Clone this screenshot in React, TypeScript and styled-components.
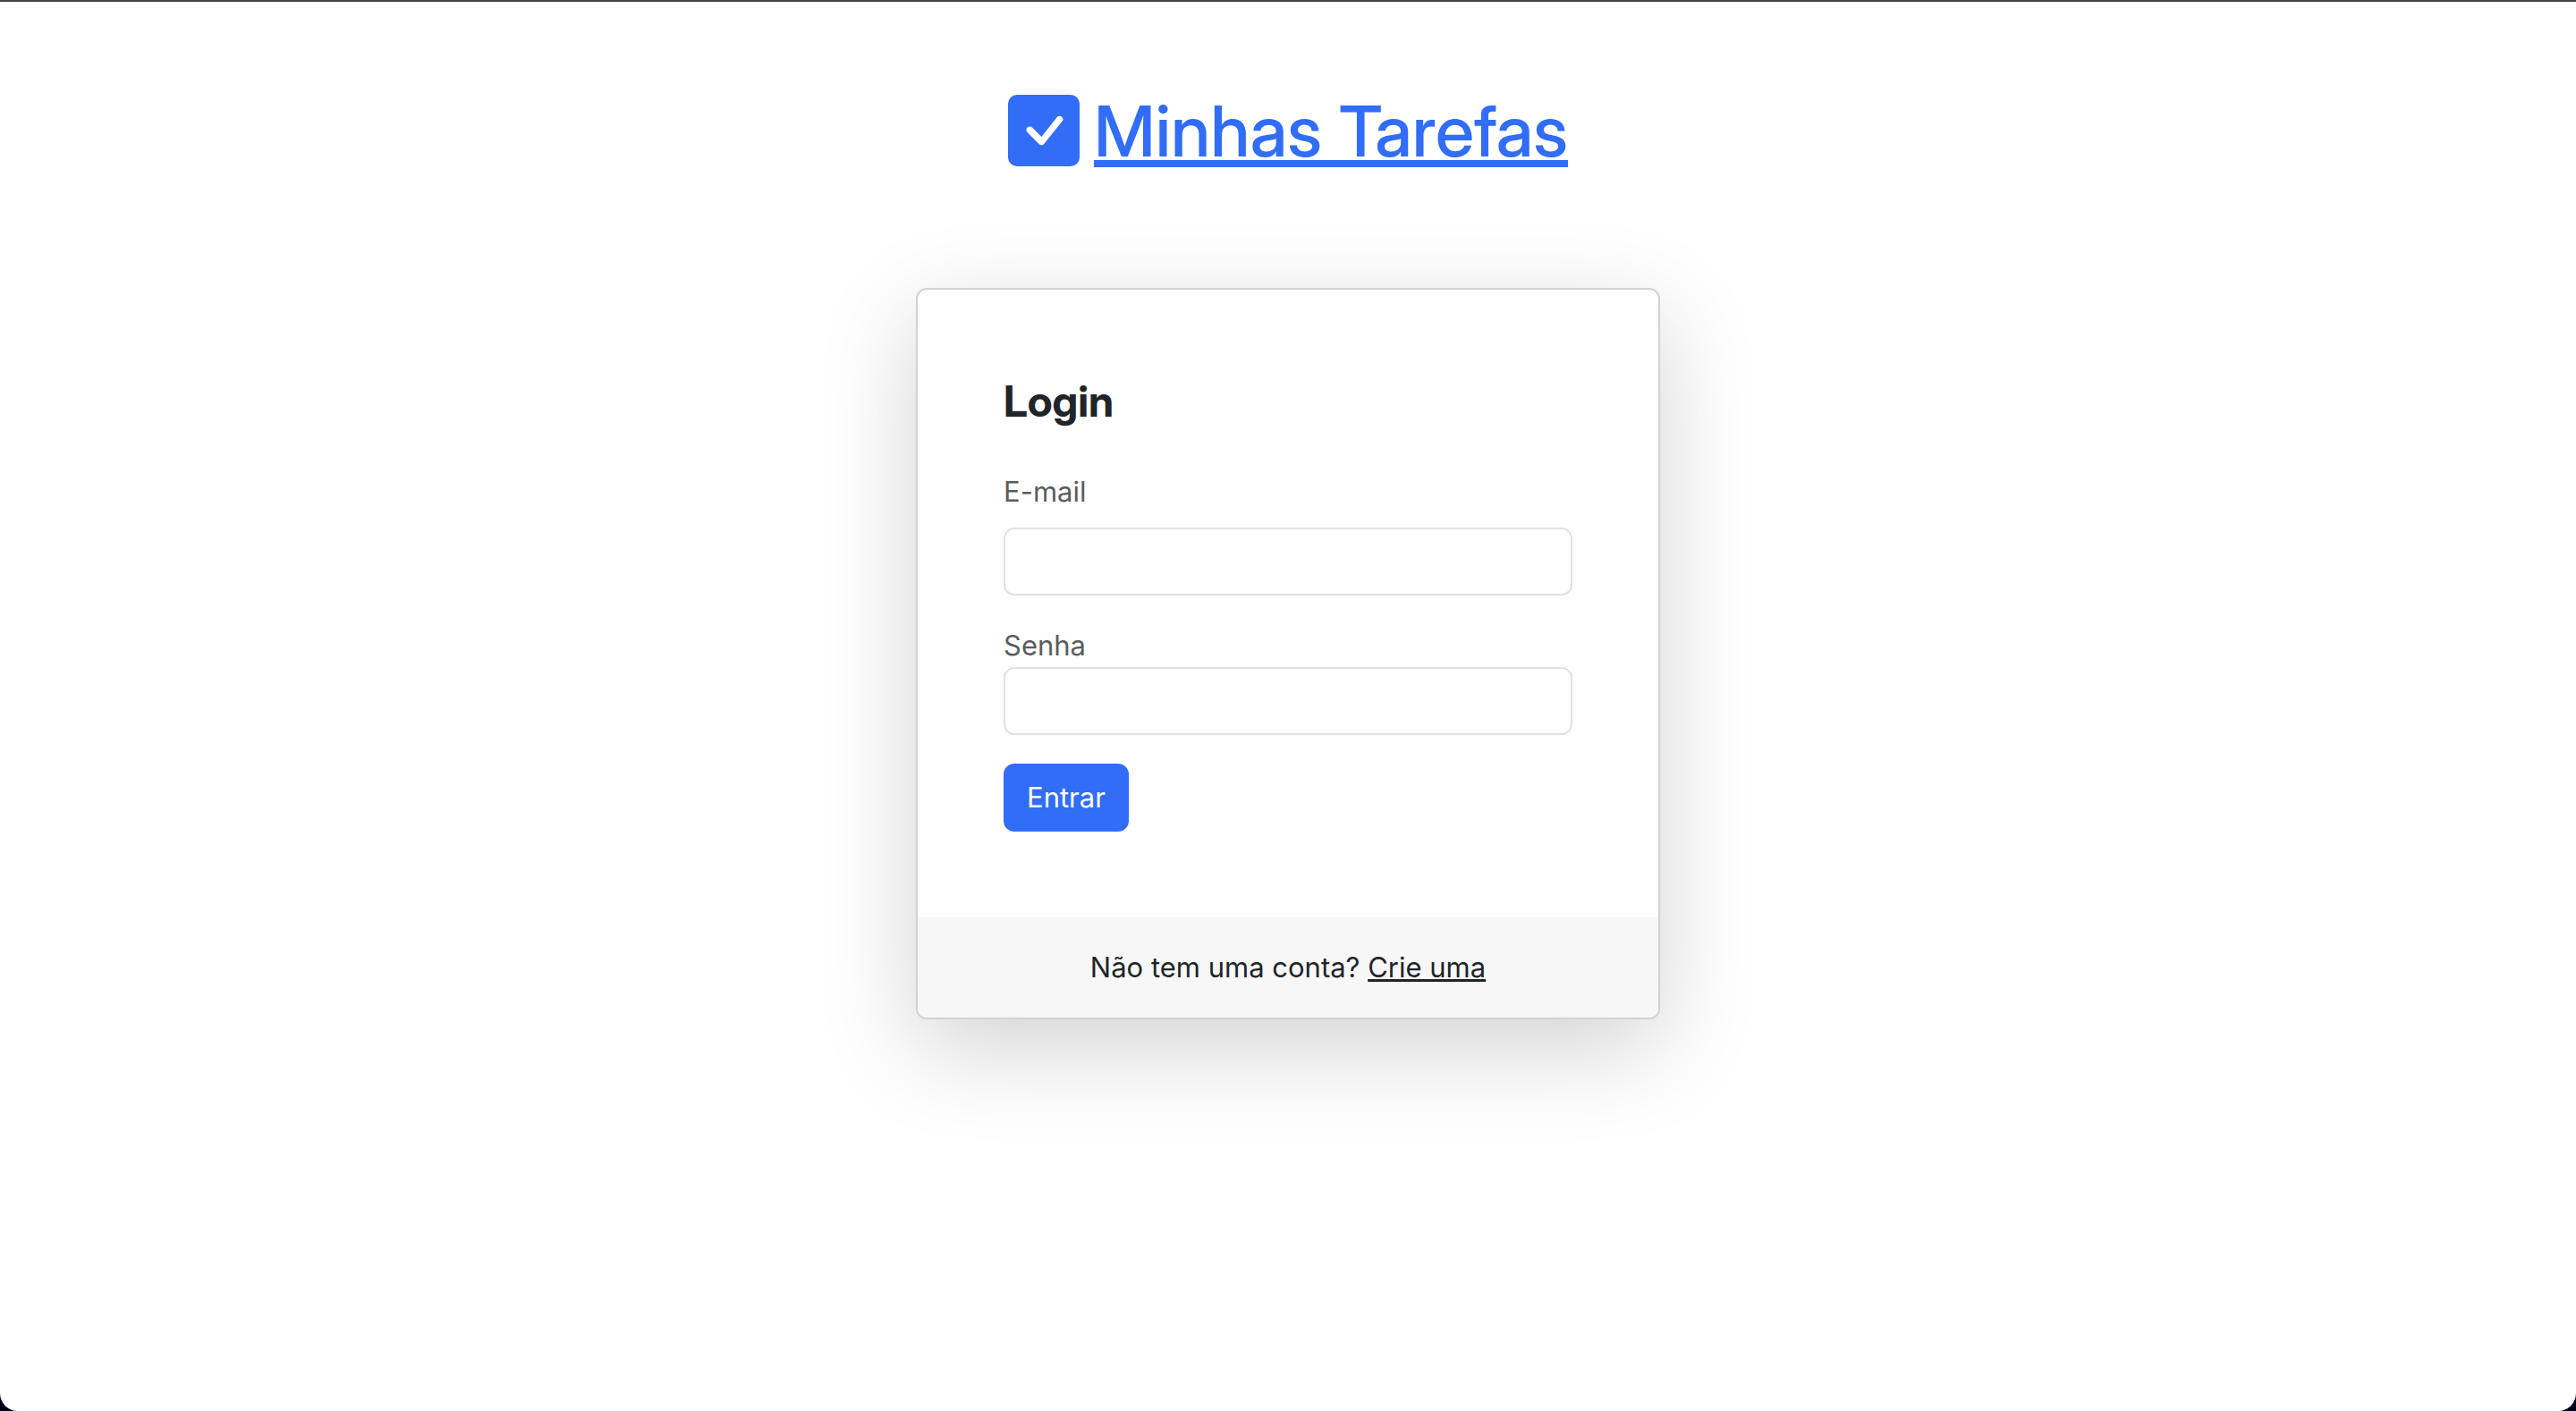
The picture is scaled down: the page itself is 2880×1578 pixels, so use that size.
import React from "react";
import styled, { createGlobalStyle } from "styled-components";

const GlobalStyle = createGlobalStyle`
  *, *::before, *::after { box-sizing: border-box; }
  body {
    margin: 0;
    background: #05001a;
    color: #212529;
    font-family: Inter, "Liberation Sans", sans-serif;
    font-size: 31px;
    line-height: 48px;
  }
`;

const Page = styled.div`
  display: flex;
  flex-direction: column;
  align-items: center;
  min-height: 100vh;
  padding: 96px 24px;
  border-top: 2px solid #454344;
  border-radius: 0 0 20px 20px;
  background: #fff;
`;

const Brand = styled.h1`
  margin: 0 0 128px;
  font-family: "Inter Display", Inter, sans-serif;
  font-size: 79px;
  font-weight: 500;
  line-height: 96px;
`;

const BrandLink = styled.a`
  display: flex;
  align-items: center;
  gap: 16px;
  color: #316df6;
  text-decoration-thickness: 8px;
  text-underline-offset: 4px;
  text-decoration-skip-ink: none;
`;

const BrandIcon = styled.svg`
  flex: none;
  width: 80px;
  height: 80px;
`;

const Card = styled.main`
  width: 100%;
  max-width: 832px;
  overflow: hidden;
  border: 2px solid #d2d2d2;
  border-radius: 12px;
  background: #fff;
  box-shadow: 0 32px 108px rgba(0, 0, 0, 0.175);
`;

const CardBody = styled.form`
  display: flex;
  flex-direction: column;
  align-items: flex-start;
  gap: 32px;
  padding: 96px;
`;

const Title = styled.h2`
  margin: 0 0 16px;
  font-family: "Inter Display", Inter, sans-serif;
  font-size: 48px;
  font-weight: 700;
  line-height: 58px;
`;

const Field = styled.div<{ $gap?: number }>`
  display: flex;
  flex-direction: column;
  gap: ${({ $gap = 0 }) => $gap}px;
  width: 100%;
`;

const Label = styled.label`
  color: #595c5f;
`;

const Input = styled.input`
  width: 100%;
  padding: 12px 24px;
  border: 2px solid #dee2e6;
  border-radius: 12px;
  background: #fff;
  color: inherit;
  font: inherit;
  height: 76px;
  outline: none;
  &:focus { border-color: #86b7fe; }
`;

const Submit = styled.button`
  padding: 12px 24px;
  border: 2px solid #316df6;
  border-radius: 12px;
  background: #316df6;
  color: #fff;
  font: inherit;
  cursor: pointer;
`;

const CardFooter = styled.footer`
  padding: 32px;
  background: #f7f7f7;
  text-align: center;
`;

const SignUpLink = styled.a`
  color: inherit;
  text-decoration-thickness: 3px;
  text-underline-offset: 2px;
`;

export default function App() {
  return (
    <>
      <GlobalStyle />
      <Page>
        <Brand>
          <BrandLink href="#">
            <BrandIcon viewBox="0 0 16 16" fill="currentColor" aria-hidden="true">
              <path d="M2 0a2 2 0 0 0-2 2v12a2 2 0 0 0 2 2h12a2 2 0 0 0 2-2V2a2 2 0 0 0-2-2zm10.03 4.97a.75.75 0 0 1 .011 1.05l-3.992 4.99a.75.75 0 0 1-1.08.02L4.324 8.384a.75.75 0 1 1 1.06-1.06l2.094 2.093 3.473-4.425a.75.75 0 0 1 1.08-.022z" />
            </BrandIcon>
            Minhas Tarefas
          </BrandLink>
        </Brand>
        <Card>
          <CardBody onSubmit={(e) => e.preventDefault()}>
            <Title>Login</Title>
            <Field $gap={16}>
              <Label htmlFor="email">E-mail</Label>
              <Input id="email" type="email" name="email" />
            </Field>
            <Field>
              <Label htmlFor="senha">Senha</Label>
              <Input id="senha" type="password" name="senha" />
            </Field>
            <Submit type="submit">Entrar</Submit>
          </CardBody>
          <CardFooter>
            Não tem uma conta? <SignUpLink href="#">Crie uma</SignUpLink>
          </CardFooter>
        </Card>
      </Page>
    </>
  );
}
